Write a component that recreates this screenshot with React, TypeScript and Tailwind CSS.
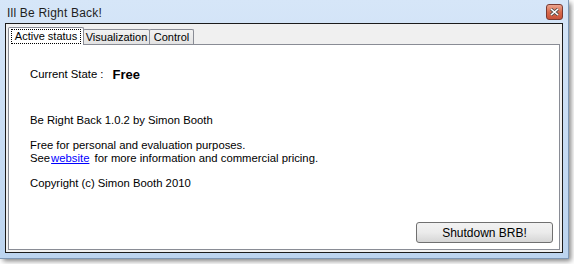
export default function App() {
  const tabs = [
    { label: 'Visualization', w: 'w-[67px]' },
    { label: 'Control', w: 'w-[45px]' },
  ];

  return (
    <div className="h-[264px] w-[574px] overflow-hidden bg-white font-['Liberation_Sans',Arial,sans-serif] text-[11px] text-black">
      <div className="flex h-[258px] w-[568px] flex-col bg-gradient-to-b from-[#d6e6f8] to-[#bcd4ef] px-[5px] pb-[5px] shadow-[3px_3px_5px_rgba(0,0,0,0.5)] ring-1 ring-[#7d96b3]">
        {/* title bar */}
        <div className="flex h-[23px] shrink-0 items-center justify-between">
          <span className="pl-[2px] pt-[2px] text-[12px] tracking-[0.2px] text-[#1e1e1e]">Ill Be Right Back!</span>
          <div className="flex h-[16px] w-[17px] items-center justify-center rounded-[3px] border border-[#7a3a32] bg-gradient-to-b from-[#eba58f] via-[#d96a4c] to-[#c9533a]">
            <svg width="9" height="8" viewBox="0 0 9 8">
              <path d="M1 1 L8 7 M8 1 L1 7" stroke="#4a4a4a" strokeWidth="3" />
              <path d="M1 1 L8 7 M8 1 L1 7" stroke="#ffffff" strokeWidth="1.6" />
            </svg>
          </div>
        </div>

        {/* client area */}
        <div className="flex min-h-0 flex-1 flex-col border border-[#1b1b1b] bg-[#f0f0f0] px-[2px] pt-[3px] pb-[2px]">
          <div className="flex h-[17px] shrink-0 items-end whitespace-nowrap text-[11px]">
            <div className="relative z-10 -mb-px flex h-[18px] w-[76px] shrink-0 items-center justify-center rounded-t-[2px] border border-b-0 border-[#898c95] bg-white">
              <span className="border border-dotted border-black px-[3px] leading-[13px]">Active status</span>
            </div>
            {tabs.map((t) => (
              <div
                key={t.label}
                className={`${t.w} -ml-px flex h-[15px] shrink-0 items-center justify-center rounded-t-[2px] border border-b-0 border-[#898c95] bg-gradient-to-b from-[#f2f2f2] to-[#e3e3e3] first:ml-[1px]`}
              >
                {t.label}
              </div>
            ))}
          </div>

          <div className="flex flex-1 flex-col border border-[#898c95] bg-white pl-[21px] pr-[6px] text-[11.3px]">
            <div className="mt-[20px] flex items-center">
              <span>Current State :</span>
              <span className="ml-[9px] text-[13px] font-bold">Free</span>
            </div>
            <p className="mt-[29px] leading-[13px]">Be Right Back 1.0.2 by Simon Booth</p>
            <p className="mt-[12px] leading-[13px]">Free for personal and evaluation purposes.</p>
            <p className="leading-[13px]">
              See<span className="ml-px mr-[2px] text-[#0000ff] underline">website</span> for more information and
              commercial pricing.
            </p>
            <p className="mt-[12px] leading-[13px]">Copyright (c) Simon Booth 2010</p>
            <div className="mt-auto mb-[6px] flex justify-end">
              <button className="flex h-[21px] w-[137px] items-center justify-center rounded-[3px] border border-[#707070] bg-gradient-to-b from-[#f2f2f2] via-[#ebebeb] to-[#d6d6d6] text-[12px]">
                Shutdown BRB!
              </button>
            </div>
          </div>
        </div>
      </div>
    </div>
  );
}
